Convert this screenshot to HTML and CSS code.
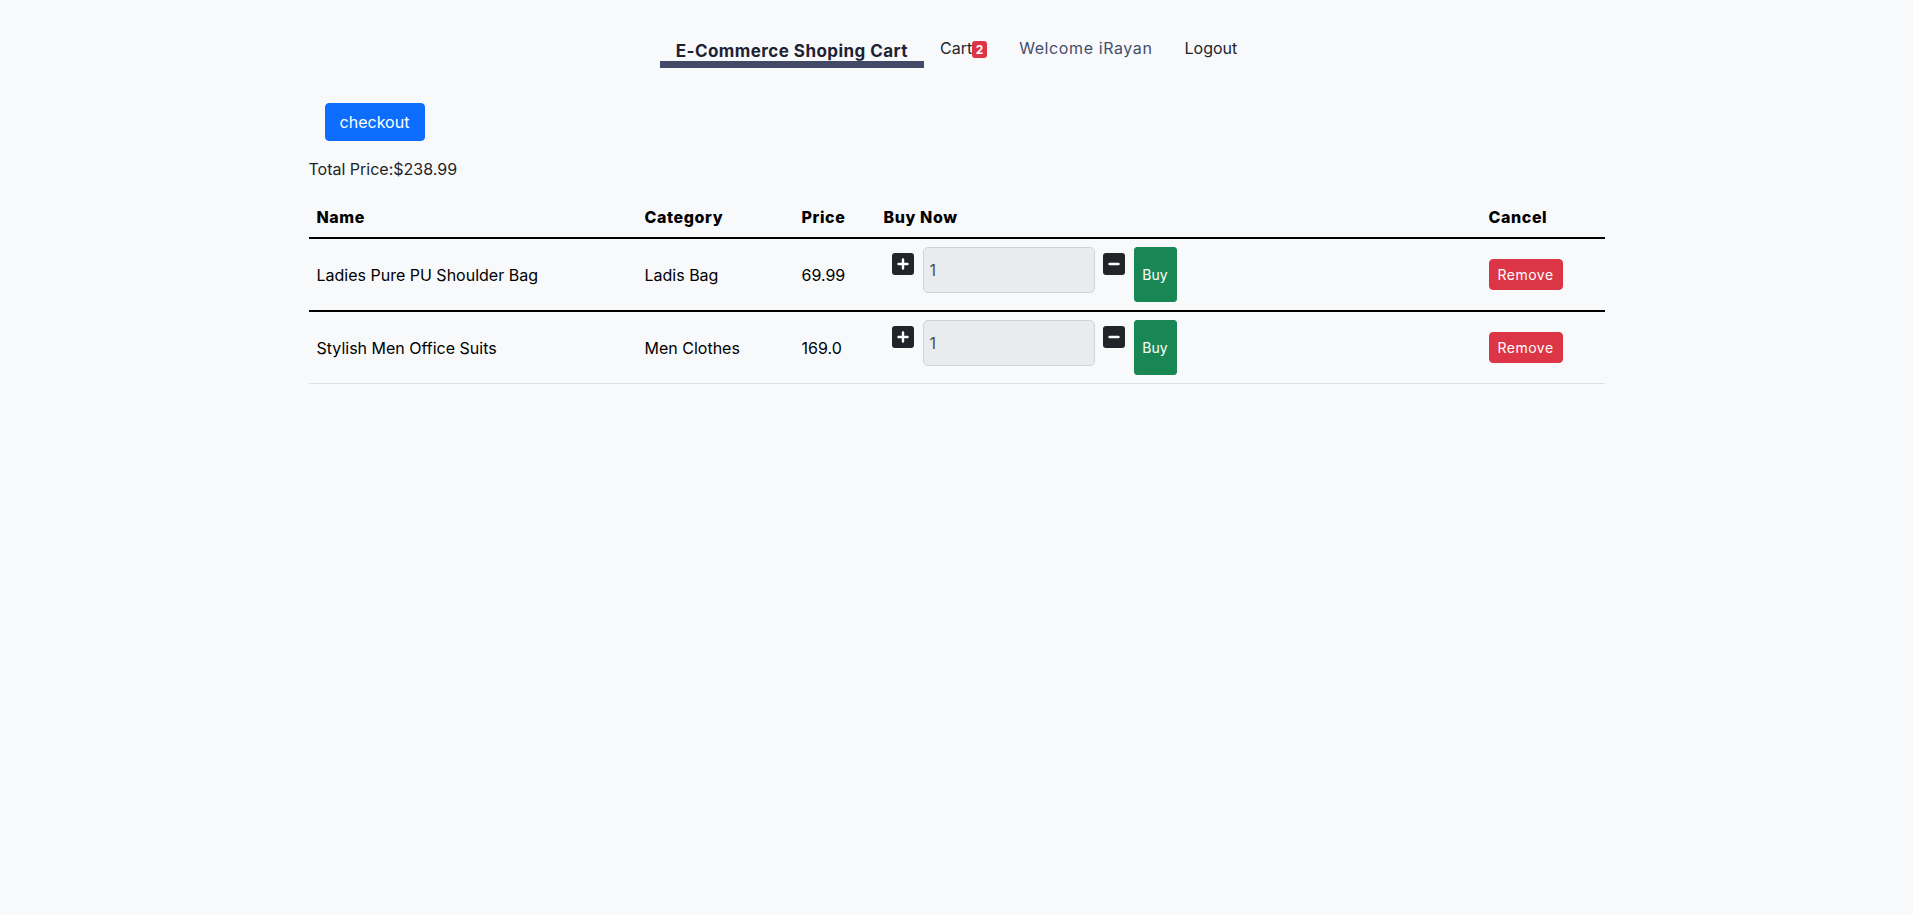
FILE: index.html
```html
<!DOCTYPE html>
<html lang="en">
<head>
<meta charset="utf-8">
<title>E-Commerce Shoping Cart</title>
<link rel="stylesheet" href="styles.css">
</head>
<body>
<nav class="topnav">
  <a class="brand" href="#">E-Commerce Shoping Cart</a>
  <a class="nav-item" href="#">Cart<span class="badge">2</span></a>
  <a class="nav-item welcome" href="#">Welcome iRayan</a>
  <a class="nav-item" href="#">Logout</a>
</nav>
<main class="container">
  <button class="btn btn-primary checkout" type="button">checkout</button>
  <p class="total">Total Price:$238.99</p>
  <table class="cart-table">
    <colgroup>
      <col class="c-name"><col class="c-cat"><col class="c-price"><col class="c-buy"><col class="c-cancel">
    </colgroup>
    <thead>
      <tr><th>Name</th><th>Category</th><th>Price</th><th>Buy Now</th><th>Cancel</th></tr>
    </thead>
    <tbody>
      <tr>
        <td>Ladies Pure PU Shoulder Bag</td>
        <td>Ladis Bag</td>
        <td>69.99</td>
        <td>
          <div class="qty">
            <button class="icon-btn" type="button" aria-label="increase"><svg viewBox="0 0 12 12" width="12" height="12"><path d="M6 1.5v9M1.5 6h9" stroke="#fff" stroke-width="2.4" stroke-linecap="round"/></svg></button>
            <input class="qty-input" type="text" value="1" disabled>
            <button class="icon-btn" type="button" aria-label="decrease"><svg viewBox="0 0 12 12" width="12" height="12"><path d="M1.5 6h9" stroke="#fff" stroke-width="2.4" stroke-linecap="round"/></svg></button>
            <button class="btn btn-success buy" type="button">Buy</button>
          </div>
        </td>
        <td><button class="btn btn-danger btn-sm" type="button">Remove</button></td>
      </tr>
      <tr>
        <td>Stylish Men Office Suits</td>
        <td>Men Clothes</td>
        <td>169.0</td>
        <td>
          <div class="qty">
            <button class="icon-btn" type="button" aria-label="increase"><svg viewBox="0 0 12 12" width="12" height="12"><path d="M6 1.5v9M1.5 6h9" stroke="#fff" stroke-width="2.4" stroke-linecap="round"/></svg></button>
            <input class="qty-input" type="text" value="1" disabled>
            <button class="icon-btn" type="button" aria-label="decrease"><svg viewBox="0 0 12 12" width="12" height="12"><path d="M1.5 6h9" stroke="#fff" stroke-width="2.4" stroke-linecap="round"/></svg></button>
            <button class="btn btn-success buy" type="button">Buy</button>
          </div>
        </td>
        <td><button class="btn btn-danger btn-sm" type="button">Remove</button></td>
      </tr>
    </tbody>
  </table>
</main>
</body>
</html>
```

FILE: styles.css
```css
* { box-sizing: border-box; }

html, body {
  margin: 0;
  padding: 0;
}

body {
  background: #f8f9fb;
  color: #212529;
  font-family: "Inter", "Open Sans", "DejaVu Sans", sans-serif;
  font-size: 16px;
  line-height: 24px;
}

a { text-decoration: none; color: inherit; }

.topnav {
  display: flex;
  justify-content: center;
  align-items: flex-start;
  padding-top: 36px;
}

.brand {
  display: block;
  margin-top: 5px;
  padding: 0 16px;
  font-size: 17px;
  font-weight: 700;
  letter-spacing: 0.45px;
  line-height: 20px;
  color: #1d2233;
  border-bottom: 7px solid #424a68;
}

.nav-item {
  display: flex;
  align-items: flex-start;
  padding: 0 16px;
  color: #212529;
}

.nav-item.welcome {
  color: #454d6c;
  letter-spacing: 0.6px;
}

.badge {
  display: inline-block;
  margin-top: 5px;
  min-width: 15px;
  height: 17px;
  padding: 0 3px;
  border-radius: 3px;
  background: #dc3545;
  color: #fff;
  font-size: 12px;
  font-weight: 700;
  line-height: 17px;
  text-align: center;
}

.container {
  max-width: 1320px;
  margin: 35px auto 0;
  padding: 0 12px;
}

.btn {
  display: inline-block;
  border: 1px solid transparent;
  border-radius: 4px;
  font-family: inherit;
  font-size: 16px;
  line-height: 24px;
  padding: 6px 12px;
  color: #fff;
  cursor: pointer;
}

.btn-primary { background: #0d6efd; border-color: #0d6efd; }
.btn-success { background: #198754; border-color: #198754; }
.btn-danger { background: #dc3545; border-color: #dc3545; }

.btn-sm {
  font-size: 14px;
  line-height: 21px;
  padding: 4px 8px;
  letter-spacing: 0.5px;
  border-radius: 4px;
}

.checkout {
  margin-left: 16px;
  width: 100px;
  height: 38px;
}

.total {
  margin: 16px 0 16px;
}

.cart-table {
  width: 100%;
  border-collapse: collapse;
  table-layout: fixed;
  color: #000;
}

.c-name { width: 328px; }
.c-cat { width: 157px; }
.c-price { width: 82px; }
.c-buy { width: 605px; }
.c-cancel { width: 124px; }

.cart-table th {
  text-align: left;
  font-weight: 800;
  letter-spacing: 0.6px;
  padding: 8px;
  border-bottom: 2px solid #000;
}

.cart-table td {
  padding: 8px;
  vertical-align: middle;
}

.cart-table tbody tr:not(:last-child) td {
  border-bottom: 2px solid #000;
}

.cart-table tbody tr:last-child td {
  border-bottom: 1px solid #dee2e6;
}

.qty {
  display: flex;
  align-items: flex-start;
  margin-left: 8px;
}

.icon-btn {
  display: flex;
  align-items: center;
  justify-content: center;
  width: 22px;
  height: 22px;
  margin-top: 6px;
  padding: 0;
  border: 0;
  border-radius: 3px;
  background: #212529;
}

.qty-input {
  width: 172px;
  height: 46px;
  margin: 0 8px 0 9px;
  padding: 0 6px;
  border: 1px solid #ced4da;
  border-radius: 5px;
  background: #e9ecef;
  color: #495057;
  font-family: inherit;
  font-size: 16px;
}

.buy {
  width: 43px;
  height: 55px;
  margin-left: 9px;
  padding: 0;
  font-size: 14px;
  border-radius: 3px;
}
```
